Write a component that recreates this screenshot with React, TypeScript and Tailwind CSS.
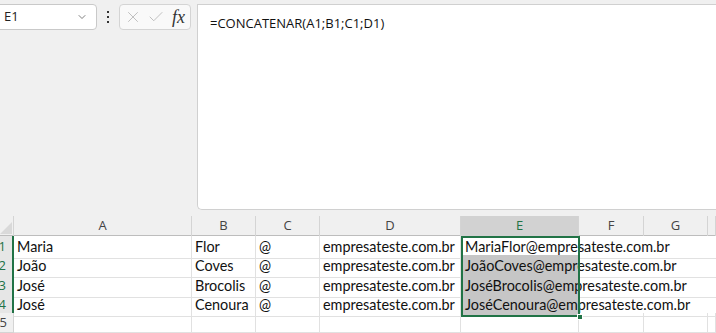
import { ChevronDown, X, Check } from "lucide-react";

const rows = [
  { n: 1, a: "Maria", b: "Flor", c: "@", d: "empresateste.com.br", e: "MariaFlor@empresateste.com.br", h: "h-[19px]" },
  { n: 2, a: "João", b: "Coves", c: "@", d: "empresateste.com.br", e: "JoãoCoves@empresateste.com.br", h: "h-[20px]" },
  { n: 3, a: "José", b: "Brocolis", c: "@", d: "empresateste.com.br", e: "JoséBrocolis@empresateste.com.br", h: "h-[19px]" },
  { n: 4, a: "José", b: "Cenoura", c: "@", d: "empresateste.com.br", e: "JoséCenoura@empresateste.com.br", h: "h-[19px]" },
];

const cols = ["A", "B", "C", "D", "E", "F", "G", ""];
const grid = "grid grid-cols-[14px_178px_64px_64px_141px_118px_65px_64px_1fr]";
const cell = "border-r border-b border-[#e1e1e1] px-[3px] flex items-center whitespace-nowrap";

export default function App() {
  return (
    <div className="w-[716px] h-[333px] overflow-hidden bg-white font-['Open_Sans',sans-serif]">
      {/* formula bar */}
      <div className="h-[216px] bg-[#f0f0f0] flex items-start pt-[4px]">
        <div className="ml-[-6px] w-[103px] h-[26px] bg-white border border-[#c9c9c9] rounded-[4px] flex items-center pl-[9px] pr-[8px]">
          <span className="text-[13px] text-[#222] flex-1">E1</span>
          <ChevronDown className="w-[12px] h-[12px] text-[#555]" strokeWidth={1.5} />
        </div>
        <div className="w-[22px] h-[26px] flex flex-col items-center justify-center gap-[3px]">
          <span className="w-[2px] h-[2px] bg-[#333]" />
          <span className="w-[2px] h-[2px] bg-[#333]" />
          <span className="w-[2px] h-[2px] bg-[#333]" />
        </div>
        <div className="w-[72px] h-[26px] bg-[#f9f9f9] border border-[#d4d4d4] rounded-[4px] flex items-center pl-[4px] gap-[5px]">
          <X className="w-[18px] h-[18px] text-[#b4b4b4]" strokeWidth={1.1} />
          <Check className="w-[18px] h-[18px] text-[#b4b4b4]" strokeWidth={1.1} />
          <span className="font-['Liberation_Serif',serif] italic text-[18px] leading-none text-[#333] ml-[2px]">fx</span>
        </div>
        <div className="ml-[6px] flex-1 h-[206px] bg-white border border-[#d0d0d0] border-r-0 rounded-bl-[5px] pl-[12px] pt-[5px]">
          <span className="text-[13px] text-[#111]">=CONCATENAR(A1;B1;C1;D1)</span>
        </div>
      </div>

      {/* column headers */}
      <div className={`${grid} h-[20px] bg-[#f0f0f0] border-b border-[#bdbdbd] text-[13px] text-[#444]`}>
        <div className="border-r border-[#d4d4d4] relative overflow-hidden">
          <svg className="absolute left-0 bottom-[2px]" width="12" height="12" viewBox="0 0 12 12">
            <polygon points="12,0 12,12 0,12" fill="#d9d9d9" />
          </svg>
        </div>
        {cols.map((c) => (
          <div
            key={c || "h"}
            className={`flex items-center justify-center border-r border-[#d4d4d4] ${
              c === "E" ? "bg-[#d2d2d2] text-[#217346]" : ""
            }`}
          >
            {c}
          </div>
        ))}
      </div>

      {/* data rows */}
      {rows.map((r) => (
        <div key={r.n} className={`${grid} ${r.h} text-[14.4px] text-[#111] font-['Lato',sans-serif]`}>
          <div className="bg-[#e6e6e6] border-b border-r-2 border-b-[#d4d4d4] border-r-[#217346] overflow-hidden flex items-center justify-end pr-[6px] text-[13px] text-[#217346] font-['Open_Sans',sans-serif]">
            {r.n}
          </div>
          <div className={cell}>{r.a}</div>
          <div className={cell}>{r.b}</div>
          <div className={cell}>{r.c}</div>
          <div className={cell}>{r.d}</div>
          <div className="relative flex items-center whitespace-nowrap border-b border-[#e1e1e1]">
            <div
              className={`absolute inset-0 ${
                r.n === 1 ? "" : "bg-[#c6c6c6] border-b border-white"
              }`}
            />
            <span className="relative z-10 pl-[4px]">{r.e}</span>
            {r.n === 1 && (
              <div className="absolute left-0 right-[-1px] top-0 h-[2px] bg-[#217346] z-20" />
            )}
            {r.n === 4 && (
              <>
                <div className="absolute left-0 right-[-1px] bottom-[-1px] h-[2px] bg-[#217346] z-20" />
                <div className="absolute right-[-4px] bottom-[-4px] w-[6px] h-[6px] bg-[#217346] border border-white z-30" />
              </>
            )}
            <div className="absolute left-0 top-0 bottom-[-1px] w-[2px] bg-[#217346] z-20" />
            <div className="absolute right-[-1px] top-0 bottom-[-1px] w-[2px] bg-[#217346] z-20" />
          </div>
          <div className="border-b border-[#e1e1e1]" />
          <div className="border-b border-[#e1e1e1]" />
          <div className="border-b border-[#e1e1e1]" />
        </div>
      ))}
      <div className={`${grid} h-[20px]`}>
        <div className="bg-[#f0f0f0] border-r border-b border-[#d4d4d4] overflow-hidden flex items-center justify-end pr-[6px] text-[13px] text-[#444]">
          5
        </div>
        {cols.map((c) => (
          <div key={c || "h"} className="border-r border-b border-[#e1e1e1]" />
        ))}
      </div>
    </div>
  );
}
